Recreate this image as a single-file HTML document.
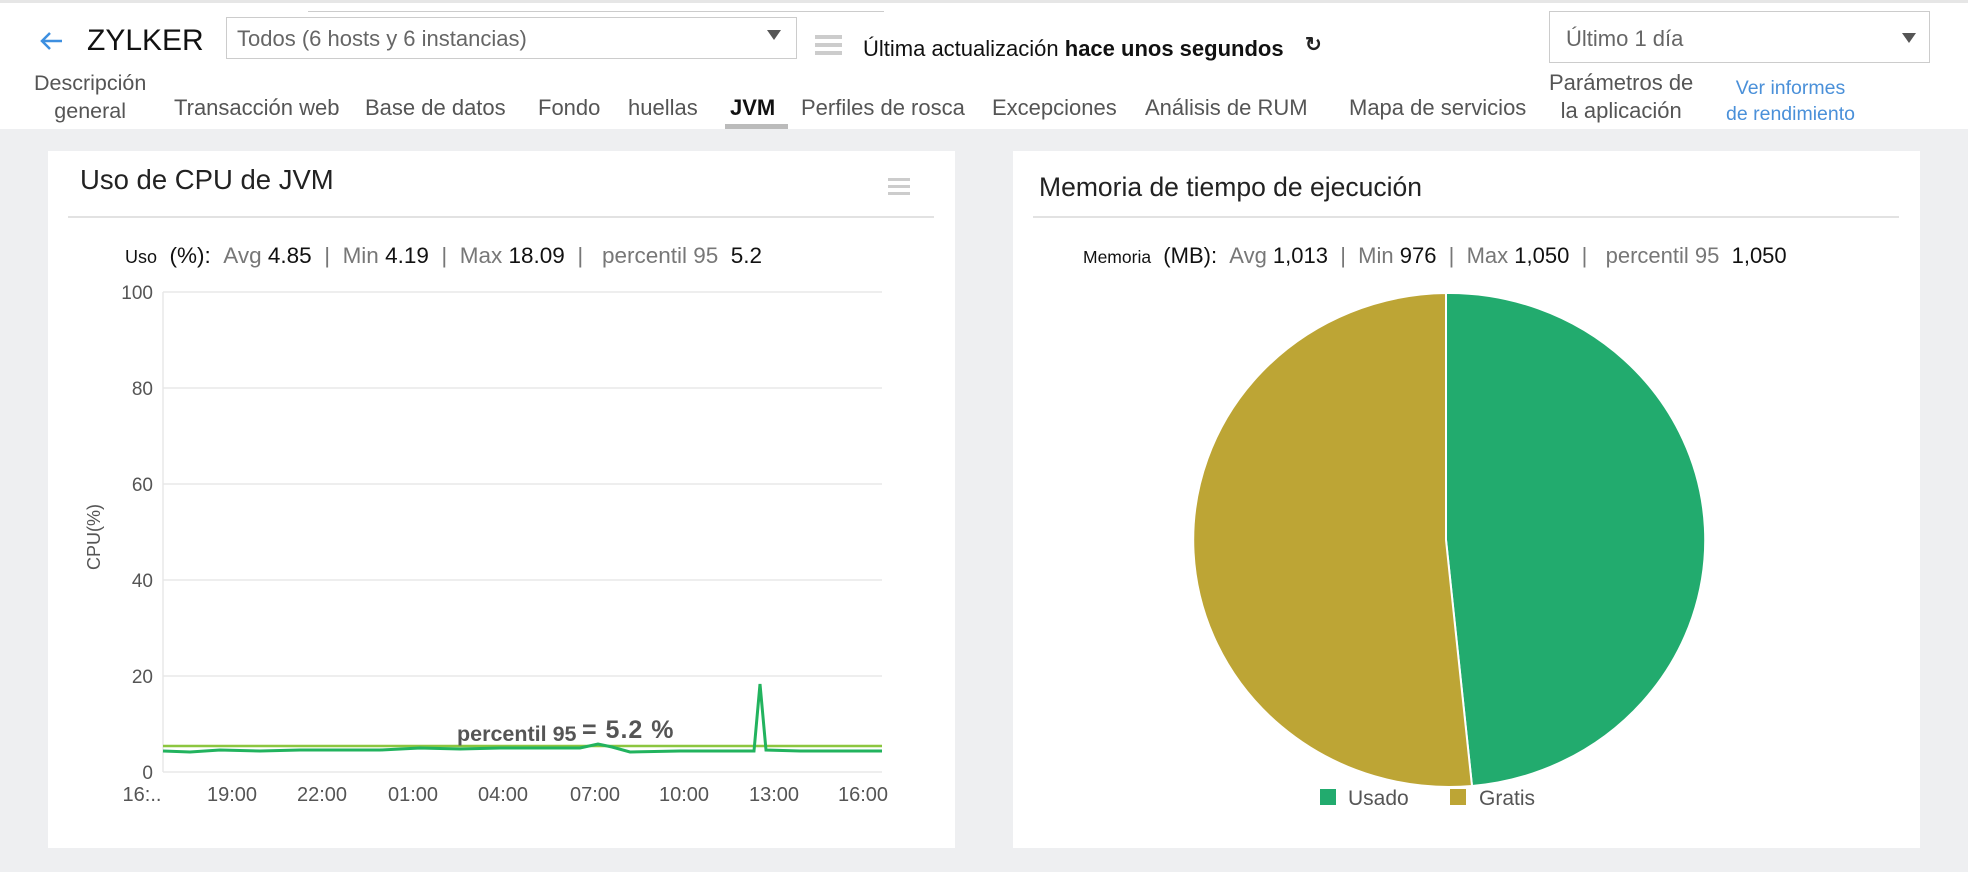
<!DOCTYPE html>
<html><head><meta charset="utf-8"><style>
*{margin:0;padding:0;box-sizing:border-box}
body{width:1968px;height:872px;overflow:hidden;background:#eeeff1;font-family:"Liberation Sans",sans-serif;position:relative}
.a{position:absolute;white-space:nowrap}
.hdr{position:absolute;left:0;top:0;width:1968px;height:129px;background:#fff;border-top:3px solid #e6e6e6}
.tab{position:absolute;font-size:22px;color:#555;top:95px}
.card{position:absolute;background:#fff;top:151px;height:697px;width:907px}
.g{color:#777}
</style></head><body>
<div class="hdr"></div>
<div class="a" style="left:308px;top:11px;width:576px;height:1px;background:#ccc"></div>
<svg class="a" style="left:38px;top:30px" width="26" height="22" viewBox="0 0 26 22"><path d="M24 11H4M12 3L4 11l8 8" stroke="#3d8fe0" stroke-width="2.5" fill="none"/></svg>
<div class="a" style="left:87px;top:24px;font-size:30px;color:#111">ZYLKER</div>
<div class="a" style="left:226px;top:17px;width:571px;height:42px;border:1px solid #ccc;font-size:22px;color:#666;padding:8px 10px">Todos (6 hosts y 6 instancias)</div>
<svg class="a" style="left:767px;top:30px" width="14" height="10"><path d="M0 0h14L7 10z" fill="#555"/></svg>
<div class="a" style="left:815px;top:35px;width:27px;height:4px;background:#ccc;box-shadow:0 8px 0 #ccc,0 16px 0 #ccc"></div>
<div class="a" style="left:863px;top:36px;font-size:22px;color:#111">Última actualización <b>hace unos segundos</b></div>
<div class="a" style="left:1305px;top:32px;font-size:20px;color:#222;font-weight:bold">↻</div>
<div class="a" style="left:1549px;top:11px;width:381px;height:52px;border:1px solid #ccc;font-size:22px;color:#666;padding:14px 16px">Último 1 día</div>
<svg class="a" style="left:1902px;top:33px" width="14" height="10"><path d="M0 0h14L7 10z" fill="#555"/></svg>
<div class="tab" style="left:34px;top:69px;text-align:center;line-height:28px;font-size:21.5px">Descripción<br>general</div>
<div class="tab" style="left:174px">Transacción web</div>
<div class="tab" style="left:365px">Base de datos</div>
<div class="tab" style="left:538px">Fondo</div>
<div class="tab" style="left:628px">huellas</div>
<div class="tab" style="left:730px;color:#111;font-weight:bold">JVM</div>
<div class="a" style="left:725px;top:124px;width:63px;height:5px;background:#bbb"></div>
<div class="tab" style="left:801px">Perfiles de rosca</div>
<div class="tab" style="left:992px">Excepciones</div>
<div class="tab" style="left:1145px">Análisis de RUM</div>
<div class="tab" style="left:1349px">Mapa de servicios</div>
<div class="tab" style="left:1549px;top:69px;text-align:center;line-height:28px">Parámetros de<br>la aplicación</div>
<div class="tab" style="left:1726px;top:75px;text-align:center;line-height:26px;color:#4a90d9;font-size:19.5px">Ver informes<br>de rendimiento</div>

<div class="card" style="left:48px"></div>
<div class="card" style="left:1013px"></div>
<div class="a" style="left:80px;top:164px;font-size:27.5px;color:#222">Uso de CPU de JVM</div>
<div class="a" style="left:888px;top:178px;width:22px;height:3px;background:#ccc;box-shadow:0 7px 0 #ccc,0 14px 0 #ccc"></div>
<div class="a" style="left:68px;top:216px;width:866px;height:2px;background:#e2e2e2"></div>
<div class="a" style="left:125px;top:243px;font-size:22.5px;color:#111"><span style="font-size:18px">Uso</span> &nbsp;(%): &nbsp;<span class="g">Avg</span> 4.85 &nbsp;<span class="g">|</span>&nbsp; <span class="g">Min</span> 4.19 &nbsp;<span class="g">|</span>&nbsp; <span class="g">Max</span> 18.09 &nbsp;<span class="g">|</span>&nbsp;&nbsp; <span class="g">percentil 95</span> &nbsp;5.2</div>

<svg class="a" style="left:0;top:0" width="1968" height="872">
<g stroke="#e8e8e8" stroke-width="1.5">
<line x1="163" y1="292" x2="882" y2="292"/><line x1="163" y1="388" x2="882" y2="388"/><line x1="163" y1="484" x2="882" y2="484"/><line x1="163" y1="580" x2="882" y2="580"/><line x1="163" y1="676" x2="882" y2="676"/>
<line x1="163" y1="292" x2="163" y2="772"/><line x1="163" y1="772" x2="882" y2="772"/>
</g>
<g font-family="Liberation Sans" font-size="19" fill="#555" text-anchor="end">
<text x="153" y="299">100</text><text x="153" y="395">80</text><text x="153" y="491">60</text><text x="153" y="587">40</text><text x="153" y="683">20</text><text x="153" y="779">0</text>
</g>
<text x="100" y="537" font-family="Liberation Sans" font-size="18" fill="#555" transform="rotate(-90 100 537)" text-anchor="middle">CPU(%)</text>
<g font-family="Liberation Sans" font-size="20" fill="#555" text-anchor="middle">
<text x="142" y="801">16:..</text><text x="232" y="801">19:00</text><text x="322" y="801">22:00</text><text x="413" y="801">01:00</text><text x="503" y="801">04:00</text><text x="595" y="801">07:00</text><text x="684" y="801">10:00</text><text x="774" y="801">13:00</text><text x="863" y="801">16:00</text>
</g>
<line x1="163" y1="746" x2="882" y2="746" stroke="#8cc63f" stroke-width="2.5"/>
<polyline fill="none" stroke="#22b35e" stroke-width="3" points="163,751 190,752 220,750 260,751 300,750 340,750 380,750 420,748 460,749 500,748 540,748 580,748 598,744 612,747 630,752 680,751 720,751 748,751 754,751 760,684 766,750 800,751 840,751 882,751"/>
<text x="457" y="741" font-family="Liberation Sans" font-size="21.5" font-weight="bold" fill="#555">percentil 95</text>
<text x="582" y="738" font-family="Liberation Sans" font-size="25" font-weight="bold" fill="#555" letter-spacing="1">= 5.2 %</text>
<path d="M1446 540 L1446 293 A256 247 0 0 1 1472 786 Z" fill="#22ab6e" stroke="#fff" stroke-width="2"/>
<path d="M1446 540 L1472 786 A256 247 0 1 1 1446 293 Z" fill="#bda535" stroke="#fff" stroke-width="2"/>
<rect x="1320" y="789" width="16" height="16" fill="#22ab6e"/>
<text x="1348" y="805" font-family="Liberation Sans" font-size="21" fill="#555">Usado</text>
<rect x="1450" y="789" width="16" height="16" fill="#bda535"/>
<text x="1479" y="805" font-family="Liberation Sans" font-size="21" fill="#555">Gratis</text>
</svg>
<div class="a" style="left:1039px;top:172px;font-size:26.5px;color:#222">Memoria de tiempo de ejecución</div>
<div class="a" style="left:1033px;top:216px;width:866px;height:2px;background:#e2e2e2"></div>
<div class="a" style="left:1083px;top:243px;font-size:22px;color:#111"><span style="font-size:17.5px">Memoria</span> &nbsp;(MB): &nbsp;<span class="g">Avg</span> 1,013 &nbsp;<span class="g">|</span>&nbsp; <span class="g">Min</span> 976 &nbsp;<span class="g">|</span>&nbsp; <span class="g">Max</span> 1,050 &nbsp;<span class="g">|</span>&nbsp;&nbsp; <span class="g">percentil 95</span> &nbsp;1,050</div>
</body></html>
